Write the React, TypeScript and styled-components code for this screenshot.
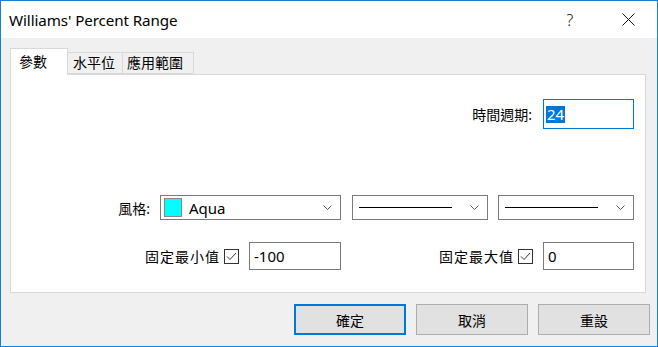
import React from "react";
import styled, { createGlobalStyle } from "styled-components";

const GlobalStyle = createGlobalStyle`
  html, body {
    margin: 0;
    padding: 0;
    background: #f0f0f0;
  }
  * {
    box-sizing: border-box;
  }
`;

const cjk = `"Noto Sans", "Noto Sans CJK TC", sans-serif`;

const Window = styled.div`
  width: 658px;
  height: 347px;
  border: 1px solid #1a7fd4;
  background: #f0f0f0;
  display: flex;
  flex-direction: column;
  font-family: ${cjk};
  color: #000;
`;

const TitleBar = styled.div`
  height: 37px;
  background: #fff;
  display: flex;
  align-items: center;
  padding-left: 8px;
`;

const Title = styled.div`
  flex: 1;
  font-size: 15.2px;
  letter-spacing: -0.1px;
`;

const TitleButton = styled.div<{ $mr?: number }>`
  width: 46px;
  height: 37px;
  margin-right: ${({ $mr }) => $mr ?? 0}px;
  display: flex;
  align-items: center;
  justify-content: center;
  font-size: 16px;
  font-weight: 300;
  color: #111;
`;

const Body = styled.div`
  flex: 1;
  display: flex;
  flex-direction: column;
  padding: 10px 11px 12px 9px;
`;

const TabRow = styled.div`
  display: flex;
  align-items: flex-end;
  height: 26px;
`;

const Tab = styled.div<{ $active?: boolean; $w: number; $pl: number }>`
  width: ${({ $w }) => $w}px;
  height: ${({ $active }) => ($active ? 27 : 22)}px;
  margin-bottom: ${({ $active }) => ($active ? -1 : 0)}px;
  padding-left: ${({ $pl }) => $pl}px;
  background: ${({ $active }) => ($active ? "#fff" : "#f0f0f0")};
  border: 1px solid #d9d9d9;
  border-bottom: ${({ $active }) => ($active ? "none" : "1px solid #d9d9d9")};
  border-left: ${({ $active }) => ($active ? "1px solid #d9d9d9" : "none")};
  position: relative;
  z-index: ${({ $active }) => ($active ? 1 : 0)};
  display: flex;
  align-items: center;
  font-size: 14px;
  line-height: 1;
`;

const Panel = styled.div`
  height: 219px;
  background: #fff;
  border: 1px solid #d9d9d9;
  display: flex;
  flex-direction: column;
  padding: 24px 11px 0 0;
`;

const Row = styled.div<{ $mt?: number }>`
  display: flex;
  justify-content: flex-end;
  align-items: center;
  margin-top: ${({ $mt }) => $mt ?? 0}px;
`;

const Label = styled.span<{ $mr?: number; $ls?: number }>`
  font-size: 14px;
  letter-spacing: ${({ $ls }) => $ls ?? 0}px;
  margin-right: ${({ $mr }) => $mr ?? 0}px;
  white-space: nowrap;
`;

const TextBox = styled.div<{ $focus?: boolean; $w: number; $h: number }>`
  width: ${({ $w }) => $w}px;
  height: ${({ $h }) => $h}px;
  border: 1px solid ${({ $focus }) => ($focus ? "#0078d7" : "#7a7a7a")};
  background: #fff;
  display: flex;
  align-items: ${({ $focus }) => ($focus ? "center" : "flex-start")};
  padding: ${({ $focus }) => ($focus ? "0 0 0 2px" : "3px 0 0 4px")};
  font-size: 15px;
`;

const Selected = styled.span`
  background: #0078d7;
  color: #fff;
  padding: 0 1px;
  line-height: 17px;
`;

const Select = styled.div<{ $w: number; $ml?: number }>`
  width: ${({ $w }) => $w}px;
  height: 25px;
  margin-left: ${({ $ml }) => $ml ?? 0}px;
  border: 1px solid #7a7a7a;
  background: #fff;
  display: flex;
  align-items: center;
  padding: 0 8px 0 3px;
  font-size: 15px;
`;

const Swatch = styled.span<{ $color: string }>`
  width: 18px;
  height: 19px;
  background: ${({ $color }) => $color};
  border: 1px solid #8a8a8a;
  margin-right: 7px;
  flex-shrink: 0;
`;

const SelectText = styled.span`
  flex: 1;
`;

const LineSample = styled.span`
  flex: 1;
  height: 1px;
  background: #000;
  margin: 0 18px 0 3px;
`;

const Chevron = () => (
  <svg width="9" height="5" viewBox="0 0 9 5" style={{ flexShrink: 0 }}>
    <path d="M0.5 0.5 L4.5 4.5 L8.5 0.5" fill="none" stroke="#555" strokeWidth="1" />
  </svg>
);

const CheckBox = styled.span`
  width: 15px;
  height: 15px;
  border: 1px solid #333;
  background: #fff;
  display: inline-flex;
  align-items: center;
  justify-content: center;
  margin-right: 10px;
`;

const Group = styled.div<{ $ml?: number }>`
  display: flex;
  align-items: center;
  margin-left: ${({ $ml }) => $ml ?? 0}px;
`;

const ButtonRow = styled.div`
  display: flex;
  justify-content: flex-end;
  gap: 10px;
  margin-top: 11px;
  margin-right: -4px;
`;

const Button = styled.div<{ $default?: boolean }>`
  width: 112px;
  height: 31px;
  background: #e1e1e1;
  border: ${({ $default }) => ($default ? "2px solid #0078d7" : "1px solid #adadad")};
  display: flex;
  align-items: center;
  justify-content: center;
  font-size: 14px;
`;

const Check = () => (
  <svg width="11" height="9" viewBox="0 0 11 9">
    <path d="M1 4.5 L4 7.5 L10 1" fill="none" stroke="#333" strokeWidth="1" />
  </svg>
);

const CloseIcon = () => (
  <svg width="13" height="13" viewBox="0 0 13 13">
    <path d="M0.5 0.5 L12.5 12.5 M12.5 0.5 L0.5 12.5" stroke="#111" strokeWidth="1" />
  </svg>
);

export default function App() {
  return (
    <>
      <GlobalStyle />
      <Window>
        <TitleBar>
          <Title>Williams' Percent Range</Title>
          <TitleButton $mr={12}>?</TitleButton>
          <TitleButton $mr={6}>
            <CloseIcon />
          </TitleButton>
        </TitleBar>
        <Body>
          <TabRow>
            <Tab $active $w={58} $pl={8}>參數</Tab>
            <Tab $w={55} $pl={5}>水平位</Tab>
            <Tab $w={71} $pl={4}>應用範圍</Tab>
          </TabRow>
          <Panel>
            <Row>
              <Label $mr={11}>時間週期:</Label>
              <TextBox $focus $w={91} $h={30}>
                <Selected>24</Selected>
              </TextBox>
            </Row>
            <Row $mt={66}>
              <Label $mr={10}>風格:</Label>
              <Select $w={181}>
                <Swatch $color="#00ffff" />
                <SelectText>Aqua</SelectText>
                <Chevron />
              </Select>
              <Select $w={136} $ml={11}>
                <LineSample />
                <Chevron />
              </Select>
              <Select $w={136} $ml={10}>
                <LineSample />
                <Chevron />
              </Select>
            </Row>
            <Row $mt={22}>
              <Group>
                <Label $mr={4} $ls={1}>固定最小值</Label>
                <CheckBox>
                  <Check />
                </CheckBox>
                <TextBox $w={92} $h={28}>-100</TextBox>
              </Group>
              <Group $ml={98}>
                <Label $mr={4} $ls={1}>固定最大值</Label>
                <CheckBox>
                  <Check />
                </CheckBox>
                <TextBox $w={91} $h={28}>0</TextBox>
              </Group>
            </Row>
          </Panel>
          <ButtonRow>
            <Button $default>確定</Button>
            <Button>取消</Button>
            <Button>重設</Button>
          </ButtonRow>
        </Body>
      </Window>
    </>
  );
}
